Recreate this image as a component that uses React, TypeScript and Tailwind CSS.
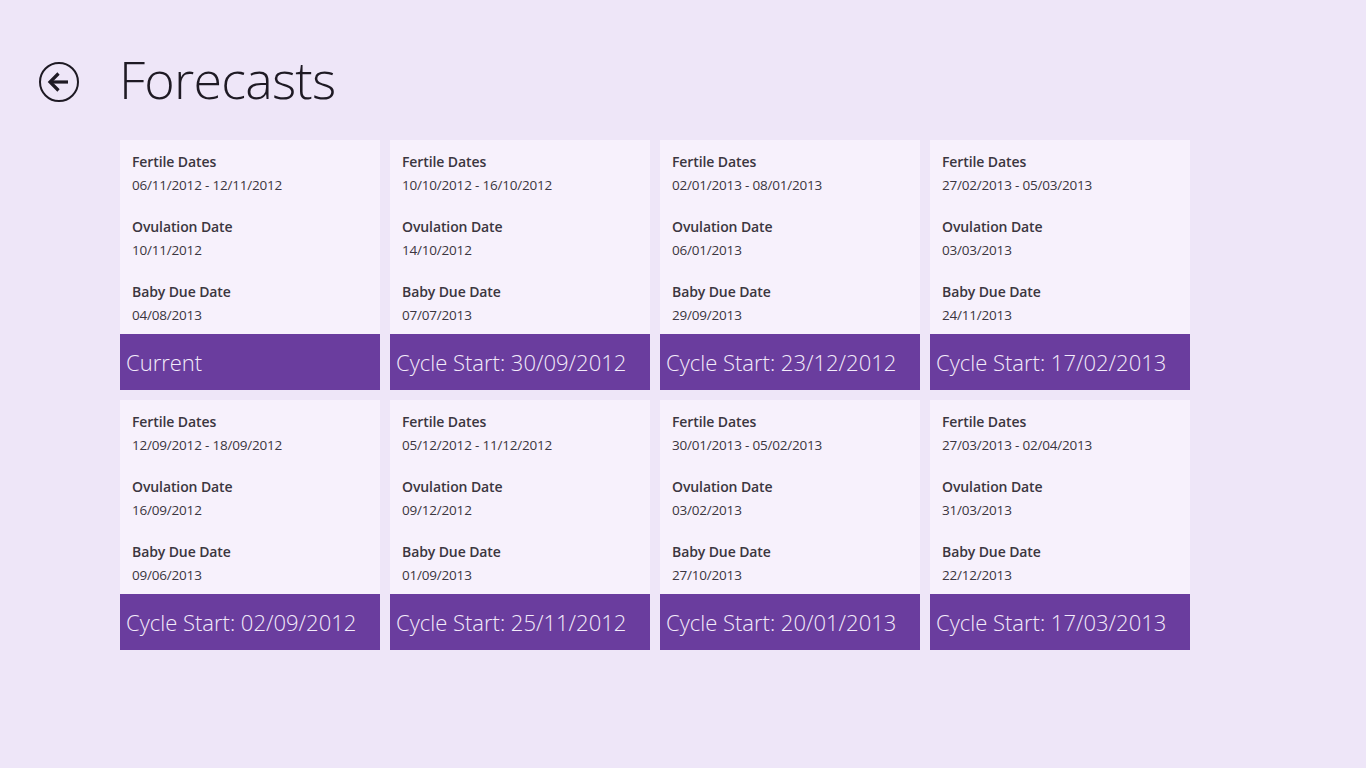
import React from 'react';

interface Forecast {
  fertile: string;
  ovulation: string;
  due: string;
  footer: string;
}

const columns: Forecast[][] = [
  [
    { fertile: '06/11/2012 - 12/11/2012', ovulation: '10/11/2012', due: '04/08/2013', footer: 'Current' },
    { fertile: '12/09/2012 - 18/09/2012', ovulation: '16/09/2012', due: '09/06/2013', footer: 'Cycle Start: 02/09/2012' },
  ],
  [
    { fertile: '10/10/2012 - 16/10/2012', ovulation: '14/10/2012', due: '07/07/2013', footer: 'Cycle Start: 30/09/2012' },
    { fertile: '05/12/2012 - 11/12/2012', ovulation: '09/12/2012', due: '01/09/2013', footer: 'Cycle Start: 25/11/2012' },
  ],
  [
    { fertile: '02/01/2013 - 08/01/2013', ovulation: '06/01/2013', due: '29/09/2013', footer: 'Cycle Start: 23/12/2012' },
    { fertile: '30/01/2013 - 05/02/2013', ovulation: '03/02/2013', due: '27/10/2013', footer: 'Cycle Start: 20/01/2013' },
  ],
  [
    { fertile: '27/02/2013 - 05/03/2013', ovulation: '03/03/2013', due: '24/11/2013', footer: 'Cycle Start: 17/02/2013' },
    { fertile: '27/03/2013 - 02/04/2013', ovulation: '31/03/2013', due: '22/12/2013', footer: 'Cycle Start: 17/03/2013' },
  ],
];

const Field = ({ label, value }: { label: string; value: string }) => (
  <div className="flex flex-col">
    <span className="text-[14px] leading-[23px] font-semibold text-[#3b3640] tracking-[-0.1px]">{label}</span>
    <span className="text-[13.5px] leading-[25px] text-[#3b3640] tracking-[-0.2px]">{value}</span>
  </div>
);

const ForecastCard = ({ item }: { item: Forecast }) => (
  <div className="w-[260px] h-[250px] flex flex-col bg-[#f7f1fc]">
    <div className="flex-1 flex flex-col gap-[17px] px-3 pt-[10px]">
      <Field label="Fertile Dates" value={item.fertile} />
      <Field label="Ovulation Date" value={item.ovulation} />
      <Field label="Baby Due Date" value={item.due} />
    </div>
    <div className="h-[56px] bg-[#6a3d9e] flex items-center px-[6px]">
      <span className="text-[22px] font-light text-[#f3ecfb] leading-none">{item.footer}</span>
    </div>
  </div>
);

export default function App() {
  return (
    <div
      className="w-full min-h-screen bg-[#eee6f8]"
      style={{ fontFamily: '"Open Sans", "Noto Sans", sans-serif' }}
    >
      <div className="flex items-center pt-[42px] h-[140px] pb-[18px]">
        <div className="w-[120px] flex justify-center pl-[2px] pr-[4px]">
          <svg width="42" height="42" viewBox="0 0 42 42">
            <circle cx="21" cy="21" r="19" fill="none" stroke="#1e1a24" strokeWidth="2" />
            <path d="M12 21 H30" stroke="#1e1a24" strokeWidth="3.2" />
            <path d="M20.5 12.5 L12 21 L20.5 29.5" fill="none" stroke="#1e1a24" strokeWidth="3.2" />
          </svg>
        </div>
        <h1 className="text-[52px] font-light text-[#1e1a24] leading-none tracking-[-0.8px] -ml-[1px] -translate-y-[3px]">Forecasts</h1>
      </div>
      <div className="flex gap-[10px] pl-[120px]">
        {columns.map((col, i) => (
          <div key={i} className="flex flex-col gap-[10px]">
            {col.map((item, j) => (
              <ForecastCard key={j} item={item} />
            ))}
          </div>
        ))}
      </div>
    </div>
  );
}
